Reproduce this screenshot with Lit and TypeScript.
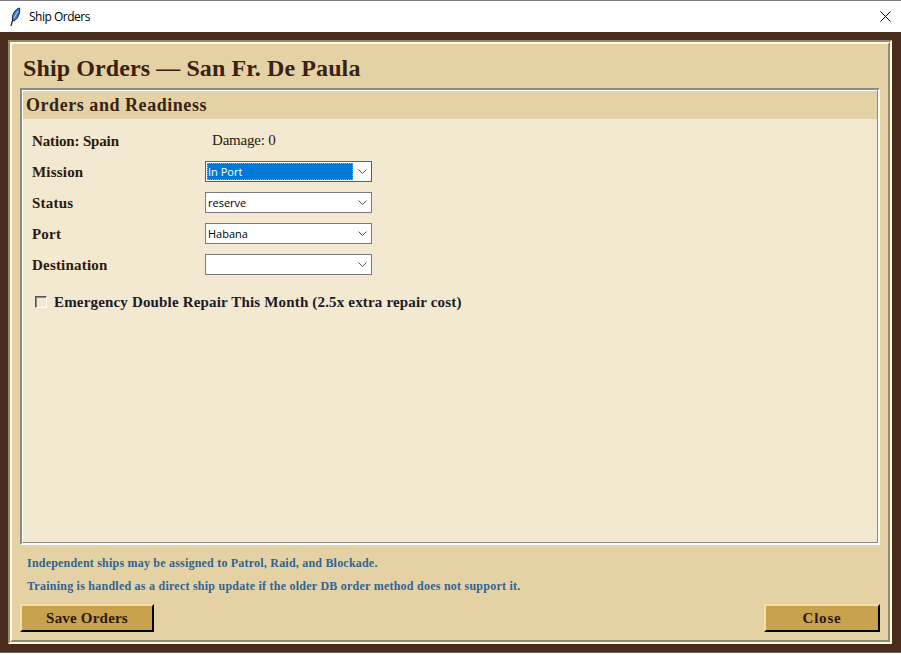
import { LitElement, html, css, svg } from "lit";
import { customElement } from "lit/decorators.js";

const chevron = svg`<svg class="chev" width="9" height="5" viewBox="0 0 9 5"><path d="M0.5 0.5 L4.5 4.5 L8.5 0.5" fill="none" stroke="#555" stroke-width="1"/></svg>`;

@customElement("app-root")
export class AppRoot extends LitElement {
  static styles = css`
    :host { display: block; width: 901px; height: 655px; background: #fff; overflow: hidden; font-family: "Liberation Serif", "Times New Roman", serif; color: #3a2212; }
    * { box-sizing: border-box; }
    .titlebar { height: 32px; background: #fff; border-top: 1px solid #808080; display: flex; align-items: center; padding: 0 10px; font: 12px "Open Sans", "Noto Sans", sans-serif; letter-spacing: -0.5px; color: #000; }
    .feather { margin-right: 8px; flex: none; }
    .titlebar .t { flex: 1; }
    .x { flex: none; }
    .brown { height: 621px; background: #4a2c1c; padding: 8px 9px 8px 8px; border-bottom: 1px solid #6b6558; }
    .groove-o { height: 100%; border: 2px solid; border-color: #8f8a70 #fff8dc #fff8dc #8f8a70; }
    .groove-i { height: 100%; border: 2px solid; border-color: #fff8dc #8f8a70 #8f8a70 #fff8dc; background: #e4d2a4; padding: 8px; display: flex; flex-direction: column; }
    h1 { margin: 0; font-size: 24px; line-height: 28px; letter-spacing: 0.1px; padding: 2px 0 0 3px; height: 36px; font-weight: bold; color: #3a2212; }
    .panel-o { flex: 1; border: 2px solid; border-color: #8f8a80 #fff #fff #8f8a80; min-height: 0; }
    .panel-i { height: 100%; border: 1px solid; border-color: #fff #8f8a80 #8f8a80 #fff; background: #f3e8d0; display: flex; flex-direction: column; }
    h2 { margin: 0; background: #e4d2a4; font-size: 18px; line-height: 28px; letter-spacing: 0.55px; height: 28px; padding-left: 3px; font-weight: bold; color: #3a2212; }
    .form { padding: 6px 0 0 9px; display: grid; grid-template-columns: 173px 167px; grid-auto-rows: 31px; align-items: center; color: #2a1a0c; }
    .lab { font-size: 15px; font-weight: bold; letter-spacing: 0.2px; padding-top: 2px; }
    .lab.nation { letter-spacing: -0.15px; }
    .val { font-size: 15px; padding-left: 7px; letter-spacing: -0.2px; }
    .sel { height: 21px; border: 1px solid #7a7a7a; background: #fff; display: flex; align-items: center; justify-content: space-between; padding: 0 3px 0 1px; font: 11px "Open Sans", "Noto Sans", sans-serif; color: #000; }
    .sel.focus { border-color: #0078d7; padding: 1px 3px 1px 1px; }
    .sel .txt { flex: 1; height: 100%; line-height: 20px; padding-left: 1px; }
    .sel.focus .txt { flex: none; width: 146px; line-height: 18px; background: #0078d7; color: #fff; outline: 1px dotted #e89a3c; outline-offset: -1px; }
    .chev { flex: none; margin-right: 1px; }
    .check { display: flex; align-items: center; padding: 14px 0 0 12px; font-size: 15px; font-weight: bold; letter-spacing: 0.17px; color: #1a1a28; }
    .box { width: 12px; height: 12px; border: 1px solid; border-color: #555 #fff #fff #555; box-shadow: inset 1px 1px 0 #888; margin: 0 7px 2px 0; flex: none; }
    .note { color: #2f6496; font-size: 12px; font-weight: bold; padding-left: 7px; line-height: 16px; }
    .n1 { margin-top: 10px; letter-spacing: 0.21px; }
    .n2 { margin-top: 7px; letter-spacing: 0.24px; }
    .btns { display: flex; justify-content: space-between; margin-top: 10px; }
    button { font-family: inherit; font-size: 15px; font-weight: bold; height: 28px; background: #c8a24c; border: 2px solid; border-color: #f5dfa5 #000 #000 #f5dfa5; color: #2a1a0c; padding: 0; }
    .save { width: 134px; letter-spacing: 0.2px; }
    .close { width: 116px; letter-spacing: 0.8px; }
  `;

  render() {
    return html`
      <div class="titlebar">
        <svg class="feather" width="11" height="20" viewBox="0 0 11 20">
          <path d="M1 19 C2 14 3 12 4 10" fill="none" stroke="#111" stroke-width="1.2"/>
          <path d="M2.5 13 C1.5 8 5 2 9.5 1 C10.5 5 8 12 4 14 Z" fill="#3d7cc9" stroke="#14263c" stroke-width="1"/>
          <path d="M4 11 L8 4" stroke="#cfe2f5" stroke-width="0.8"/>
        </svg>
        <span class="t">Ship Orders</span>
        <svg class="x" width="11" height="11" viewBox="0 0 11 11"><path d="M0.5 0.5 L10.5 10.5 M10.5 0.5 L0.5 10.5" stroke="#000" stroke-width="1"/></svg>
      </div>
      <div class="brown">
        <div class="groove-o">
          <div class="groove-i">
            <h1>Ship Orders — San Fr. De Paula</h1>
            <div class="panel-o">
              <div class="panel-i">
                <h2>Orders and Readiness</h2>
                <div class="form">
                  <div class="lab nation">Nation: Spain</div><div class="val">Damage: 0</div>
                  <div class="lab">Mission</div><div class="sel focus"><span class="txt">In Port</span>${chevron}</div>
                  <div class="lab">Status</div><div class="sel"><span class="txt">reserve</span>${chevron}</div>
                  <div class="lab">Port</div><div class="sel"><span class="txt">Habana</span>${chevron}</div>
                  <div class="lab">Destination</div><div class="sel"><span class="txt"></span>${chevron}</div>
                </div>
                <div class="check"><span class="box"></span>Emergency Double Repair This Month (2.5x extra repair cost)</div>
              </div>
            </div>
            <div class="note n1">Independent ships may be assigned to Patrol, Raid, and Blockade.</div>
            <div class="note n2">Training is handled as a direct ship update if the older DB order method does not support it.</div>
            <div class="btns"><button class="save">Save Orders</button><button class="close">Close</button></div>
          </div>
        </div>
      </div>
    `;
  }
}
